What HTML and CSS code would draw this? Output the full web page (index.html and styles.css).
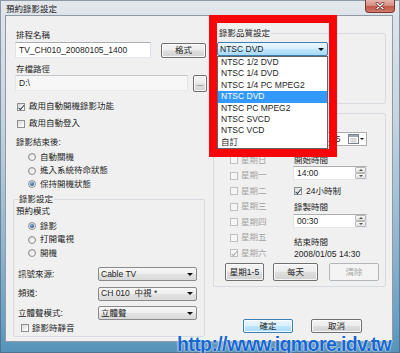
FILE: index.html
```html
<!DOCTYPE html>
<html>
<head>
<meta charset="utf-8">
<title>預約錄影設定</title>
<link rel="stylesheet" href="styles.css">
</head>
<body>
<div class="window">
  <div class="titlebar">
    <span class="title">預約錄影設定</span>
    <span class="close"><svg width="10" height="8" viewBox="0 0 10 8"><path d="M2 1.2 L8 6.8 M8 1.2 L2 6.8" stroke="#5a1a14" stroke-width="2.6" stroke-linecap="round"/><path d="M2 1.2 L8 6.8 M8 1.2 L2 6.8" stroke="#ffffff" stroke-width="1.5" stroke-linecap="round"/></svg></span>
  </div>
  <div class="client">
    <div class="col-left">
      <div class="lbl l-name">排程名稱</div>
      <div class="name-row">
        <div class="input name-input">TV_CH010_20080105_1400</div>
        <div class="btn fmt-btn">格式</div>
      </div>
      <div class="lbl l-path">存檔路徑</div>
      <div class="path-row">
        <div class="input path-input">D:\</div>
        <div class="btn dots-btn">...</div>
      </div>
      <div class="check c-auto"><span class="cb on"></span>啟用自動開機錄影功能</div>
      <div class="check c-login"><span class="cb"></span>啟用自動登入</div>
      <div class="lbl l-after">錄影結束後:</div>
      <div class="radios r-after">
        <div class="radio"><span class="rb"></span>自動關機</div>
        <div class="radio"><span class="rb"></span>進入系統待命狀態</div>
        <div class="radio"><span class="rb on"></span>保持開機狀態</div>
      </div>
      <fieldset class="group g-rec">
        <legend>錄影設定</legend>
        <div class="lbl l-mode">預約模式</div>
        <div class="radios r-mode">
          <div class="radio"><span class="rb on"></span>錄影</div>
          <div class="radio"><span class="rb"></span>打開電視</div>
          <div class="radio"><span class="rb"></span>開機</div>
        </div>
        <div class="sel-row s-first"><span class="sel-lbl">訊號來源:</span><div class="combo">Cable TV<i class="arr"></i></div></div>
        <div class="sel-row"><span class="sel-lbl">頻道:</span><div class="combo">CH 010  中視 *<i class="arr"></i></div></div>
        <div class="sel-row"><span class="sel-lbl">立體聲模式:</span><div class="combo">立體聲<i class="arr"></i></div></div>
        <div class="check c-mute"><span class="cb"></span>錄影時靜音</div>
      </fieldset>
    </div>
    <div class="col-right">
      <fieldset class="group g-quality">
        <legend>錄影品質設定</legend>
        <div class="combo focus q-sel">NTSC DVD<i class="arr"></i></div>
      </fieldset>
      <fieldset class="group g-sched">
        <div class="date-pick"><span>2008/01/05</span><svg class="cal" width="11" height="10" viewBox="0 0 11 10"><rect x="0.5" y="0.5" width="10" height="9" fill="#fbfbfb" stroke="#7a838c"/><rect x="1" y="1" width="9" height="2" fill="#9aa9b8"/><path d="M2 5h7M2 7.2h7M4.2 4v5M6.8 4v5" stroke="#b6bec6" stroke-width="0.7"/></svg><i class="arr"></i></div>
        <div class="sched-body">
          <div class="days">
            <div class="check day dis"><span class="cb"></span>星期日</div>
            <div class="check day dis"><span class="cb"></span>星期一</div>
            <div class="check day dis"><span class="cb"></span>星期二</div>
            <div class="check day dis"><span class="cb"></span>星期三</div>
            <div class="check day dis"><span class="cb"></span>星期四</div>
            <div class="check day dis"><span class="cb"></span>星期五</div>
            <div class="check day dis"><span class="cb on"></span>星期六</div>
          </div>
          <div class="times">
            <div class="lbl t-start">開始時間</div>
            <div class="input spin s-start"><span>14:00</span><span class="spinbtns"><span class="sp"><i class="up"></i></span><span class="sp"><i class="dn"></i></span></span></div>
            <div class="check c-24"><span class="cb on"></span>24小時制</div>
            <div class="lbl t-dur">錄製時間</div>
            <div class="input spin s-dur"><span>00:30</span><span class="spinbtns"><span class="sp"><i class="up"></i></span><span class="sp"><i class="dn"></i></span></span></div>
            <div class="lbl t-end">結束時間</div>
            <div class="lbl t-endval">2008/01/05 14:30</div>
          </div>
        </div>
        <div class="day-btns">
          <div class="btn b-wk">星期1-5</div>
          <div class="btn b-daily">每天</div>
          <div class="btn dis b-clear">清除</div>
        </div>
      </fieldset>
      <div class="ok-row">
        <div class="btn default b-ok">確定</div>
        <div class="btn b-cancel">取消</div>
      </div>
    </div>
  </div>

  <div class="droplist">
    <div>NTSC 1/2 DVD</div>
    <div>NTSC 1/4 DVD</div>
    <div>NTSC 1/4 PC MPEG2</div>
    <div class="hl">NTSC DVD</div>
    <div>NTSC PC MPEG2</div>
    <div>NTSC SVCD</div>
    <div>NTSC VCD</div>
    <div>自訂</div>
  </div>
  <div class="redbox"></div>
  <div class="watermark">http://www.iqmore.idv.tw</div>
</div>
</body>
</html>
```
FILE: styles.css
```css
* { box-sizing: border-box; }
html, body { margin: 0; padding: 0; }
body {
  width: 400px;
  height: 353px;
  overflow: hidden;
  font-family: "Liberation Sans", "Noto Sans CJK TC", sans-serif;
  font-size: 8.5px;
  color: #1e1e1e;
}

.window {
  position: relative;
  width: 400px;
  height: 353px;
  overflow: hidden;
  background: linear-gradient(180deg, #e4e8ec 0px, #dde3e9 18px, #c6d4e0 120px, #93b6cf 240px, #6aa0c3 320px, #5693b9 353px);
  box-shadow: inset 0 0 0 1px rgba(70, 90, 110, 0.55);
}

/* title bar */
.titlebar { height: 16px; display: flex; align-items: flex-start; }
.title { margin: 4px 0 0 6px; line-height: 11px; font-size: 8.5px; color: #1a1a1a; white-space: nowrap; }
.close {
  margin-left: auto;
  margin-right: 5px;
  width: 30px;
  height: 13px;
  border: 1px solid #7a3a33;
  border-top: none;
  border-radius: 0 0 4px 4px;
  background: linear-gradient(180deg, #e6b5ae 0%, #d88f84 45%, #c4584a 55%, #d17a68 100%);
  display: flex;
  align-items: center;
  justify-content: center;
}

/* client area */
.client {
  margin-left: 6px;
  width: 386px;
  height: 325px;
  background: #f0f0f0;
  box-shadow: 0 0 0 1px #8e9ba7;
  display: flex;
  align-items: flex-start;
}
.col-left { width: 201px; flex: none; }
.col-right { flex: 1; min-width: 0; }

.lbl { height: 11px; line-height: 11px; white-space: nowrap; }

/* generic controls */
.input {
  background: #fff;
  border: 1px solid;
  border-color: #abadb3 #dbdfe6 #e3e9ef #e2e3ea;
  display: flex;
  align-items: center;
  padding-left: 3px;
  white-space: nowrap;
}
.btn {
  border: 1px solid #707070;
  border-radius: 2px;
  background: linear-gradient(180deg, #f4f4f4 0%, #ececec 48%, #dedede 52%, #d2d2d2 100%);
  box-shadow: inset 0 0 0 1px rgba(255, 255, 255, 0.8);
  display: flex;
  align-items: center;
  justify-content: center;
  white-space: nowrap;
  line-height: 11px;
}
.btn.default {
  border-color: #3c7fb1;
  background: linear-gradient(180deg, #eaf6fd 0%, #d9f0fc 48%, #bee6fd 52%, #a9dbf6 100%);
}
.btn.dis {
  border-color: #b2b6b9;
  background: #f4f4f4;
  color: #a6a6a6;
  box-shadow: none;
}

.check { display: flex; align-items: center; height: 11px; line-height: 11px; white-space: nowrap; }
.cb {
  width: 8px;
  height: 8px;
  flex: none;
  margin-right: 4px;
  border: 1px solid #8e8f8f;
  background: linear-gradient(135deg, #d6d6d6 0%, #f2f2f2 60%, #ffffff 100%);
  display: flex;
  justify-content: center;
}
.cb.on::after {
  content: "";
  display: block;
  width: 2px;
  height: 4.5px;
  margin-top: 0;
  border: solid #2c3a4a;
  border-width: 0 1.4px 1.4px 0;
  transform: rotate(40deg);
}
.dis { color: #a3a3a3; }
.dis .cb { border-color: #c0c0c0; background: #f6f6f6; }
.dis .cb.on::after { border-color: #a8a8a8; }

.radios { display: flex; flex-direction: column; }
.radio { display: flex; align-items: center; height: 13.5px; line-height: 11px; white-space: nowrap; }
.rb {
  width: 8px;
  height: 8px;
  flex: none;
  margin-right: 4px;
  border: 1px solid #8e8f8f;
  border-radius: 50%;
  background: radial-gradient(circle at 60% 65%, #ffffff 0%, #e6e6e6 50%, #cfcfcf 100%);
  display: flex;
  align-items: center;
  justify-content: center;
}
.rb.on::after {
  content: "";
  width: 4px;
  height: 4px;
  border-radius: 50%;
  background: radial-gradient(circle at 40% 35%, #7fb0e4 0%, #2c64a8 60%, #173e70 100%);
}

.combo {
  display: flex;
  align-items: center;
  height: 14px;
  padding-left: 2px;
  border: 1px solid #8a8a8a;
  border-radius: 2px;
  background: linear-gradient(180deg, #f7f7f7 0%, #efefef 48%, #e2e2e2 52%, #dadada 100%);
  white-space: pre;
  line-height: 11px;
}
.combo.focus {
  border-color: #3c7fb1;
  background: linear-gradient(180deg, #eaf6fd 0%, #d9f0fc 48%, #bee6fd 52%, #a7d9f5 100%);
}
.arr {
  margin-left: auto;
  margin-right: 3px;
  width: 0;
  height: 0;
  border-left: 3px solid transparent;
  border-right: 3px solid transparent;
  border-top: 3px solid #111;
}

/* group boxes */
.group {
  margin: 0;
  padding: 0;
  min-width: 0;
  border: 1px solid #d5dbe0;
  border-radius: 2px;
}
.group legend {
  padding: 0 1px;
  margin-left: 4px;
  height: 11px;
  line-height: 11px;
  white-space: nowrap;
}

/* left column positions */
.l-name { margin: 14px 0 0 10px; }
.name-row { display: flex; align-items: flex-start; margin: 1px 0 0 9px; height: 16px; }
.name-input { width: 136px; height: 16px; }
.fmt-btn { width: 45px; height: 15px; margin: 1px 0 0 10px; }
.l-path { margin: 6px 0 0 10px; }
.path-row { display: flex; align-items: flex-start; margin: 0 0 0 9px; height: 17px; }
.path-input { width: 173px; height: 16px; background: #f7f7f7; border-color: #c4c6ca #e0e3e8 #e6ebf0 #e2e4ea; }
.dots-btn { width: 14px; height: 17px; margin-left: 5px; font-size: 7px; }
.c-auto { margin: 9px 0 0 11px; }
.c-login { margin: 6px 0 0 11px; }
.l-after { margin: 8px 0 0 10px; }
.r-after { margin: 2.5px 0 0 22px; }

.g-rec { margin: 2.5px 0 0 7px; width: 192px; padding: 0 0 2.5px 0; }
.l-mode { margin: 1px 0 0 2px; }
.r-mode { margin: 2.75px 0 0 14px; }
.sel-row { display: flex; align-items: center; height: 14px; margin: 5.5px 0 0 4px; }
.sel-row.s-first { margin-top: 7.25px; }
.sel-lbl { width: 80px; flex: none; white-space: nowrap; line-height: 11px; }
.sel-row .combo { width: 99px; }
.c-mute { margin: 2.5px 0 0 7px; }
.c-mute .cb { margin-right: 3px; }

/* right column positions */
.g-quality { margin: 11.5px 6px 0 6px; padding: 0 0 47px 0; }
.q-sel { width: 111px; margin: 3.5px 0 0 3px; }
.g-sched { margin: 9px 6px 0 6px; padding: 0 0 5px 0; }
.date-pick {
  margin: 18px 0 0 79px;
  width: 74px;
  height: 14px;
  background: #fff;
  border: 1px solid #abadb3;
  display: flex;
  align-items: center;
  padding-left: 4px;
  line-height: 11px;
}
.date-pick .cal { margin-left: auto; }
.date-pick .arr { margin-left: 1px; margin-right: 2px; border-width: 2.5px 2.5px 0 2.5px; }

.sched-body { display: flex; align-items: flex-start; }
.days { margin: 6.25px 0 0 16px; width: 63px; flex: none; }
.day { height: 15.5px; }
.day .cb { margin-right: 3px; }
.times { flex: 1; }
.t-start { margin: 8.5px 0 0 1px; }
.spin { width: 74px; height: 14px; padding-left: 3px; line-height: 11px; }
.s-start { margin-top: 0.5px; }
.c-24 { margin: 5.5px 0 0 1px; }
.t-dur { margin: 5px 0 0 1px; }
.s-dur { margin-top: 1.5px; }
.t-end { margin: 8.5px 0 0 1px; }
.t-endval { margin: 1px 0 0 1px; }
.spinbtns { margin-left: auto; margin-right: 0; display: flex; flex-direction: column; width: 11px; height: 12px; }
.sp {
  flex: 1;
  border: 1px solid #b9b9b9;
  border-radius: 1px;
  background: linear-gradient(180deg, #f8f8f8, #e0e0e0);
  display: flex;
  align-items: center;
  justify-content: center;
}
.sp i { width: 0; height: 0; border-left: 2px solid transparent; border-right: 2px solid transparent; }
.sp i.up { border-bottom: 2px solid #555; }
.sp i.dn { border-top: 2px solid #555; }

.day-btns { display: flex; align-items: flex-start; margin: 2.25px 0 0 11px; height: 18px; }
.b-wk { width: 39px; height: 18px; }
.b-daily { width: 45px; height: 18px; margin-left: 9px; }
.b-clear { width: 50px; height: 18px; margin-left: 11px; }

.ok-row { display: flex; margin: 32px 0 0 36px; gap: 18px; }
.b-ok { width: 50px; height: 14px; }
.b-cancel { width: 51px; height: 14px; }

/* overlays */
.droplist {
  position: absolute;
  left: 217px;
  top: 56px;
  width: 111px;
  height: 93px;
  background: #fff;
  border: 1px solid #646464;
}
.droplist div { height: 11.4px; line-height: 11.4px; padding-left: 3px; white-space: nowrap; }
.droplist .hl { background: #3399ff; color: #fff; }

.redbox {
  position: absolute;
  left: 209px;
  top: 15px;
  width: 128px;
  height: 142px;
  border: 8px solid #f60606;
}

.watermark {
  position: absolute;
  left: 177px;
  top: 335px;
  font-family: "Liberation Sans", sans-serif;
  font-weight: bold;
  font-size: 19.5px;
  line-height: 19.5px;
  letter-spacing: -0.6px;
  color: #1767d0;
  text-shadow: 0 0 1px #fff, 0 0 2px #ffffff;
  white-space: nowrap;
}
```
